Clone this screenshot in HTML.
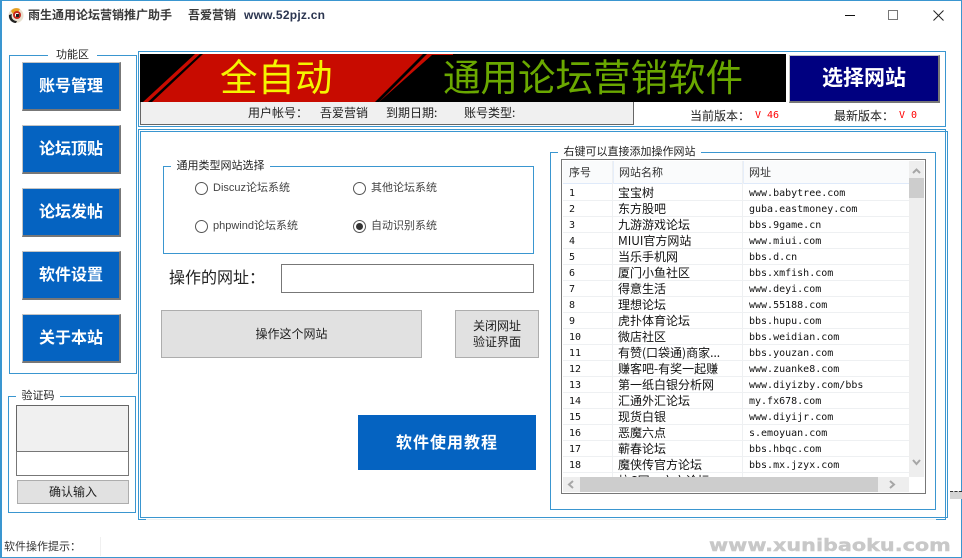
<!DOCTYPE html>
<html><head><meta charset="utf-8">
<style>
*{box-sizing:border-box;margin:0;padding:0}
html,body{width:962px;height:558px;overflow:hidden;background:#fff}
body{position:relative;font-family:"Liberation Sans","Noto Sans CJK SC",sans-serif;font-size:12px;color:#222}
.a{position:absolute}
.t{position:absolute;white-space:nowrap;line-height:16px}
.w{font-family:"WenQuanYi Zen Hei","Noto Sans CJK SC",sans-serif}
.bx{position:absolute;border:1px solid #3a96d0}
.lg{position:absolute;background:#fff;text-align:center;line-height:14px;height:14px;white-space:nowrap;font-size:11px}
.btn{position:absolute;left:22px;width:99px;height:49px;background:#0563c1;border-style:solid;border-width:1px 2px 2px 1px;border-color:#c4c4c4 #777 #777 #c4c4c4;color:#fff;font:bold 16px/43px "Noto Sans CJK SC",sans-serif;letter-spacing:0;text-align:center}
.gb{position:absolute;background:#e1e1e1;border:1px solid #adadad;text-align:center;display:flex;align-items:center;justify-content:center;line-height:16px}
.r{position:absolute;width:13px;height:13px;border:1px solid #555;border-radius:50%;background:#fff}
.r i{position:absolute;left:2px;top:2px;width:7px;height:7px;border-radius:50%;background:#333}
.rt{position:absolute;white-space:nowrap;line-height:16px;color:#444;font-size:11px}
.hd{position:absolute;top:165px;line-height:16px;color:#333;font-size:11px}
.n{position:absolute;left:569px;margin-top:1px;font:10px/16px "DejaVu Sans Mono",monospace;color:#111;height:16px}
.m{position:absolute;left:618px;width:124px;line-height:16px;height:16px;color:#111;white-space:nowrap;overflow:hidden;font-family:"WenQuanYi Zen Hei","Noto Sans CJK SC",sans-serif}
.u{position:absolute;left:749px;margin-top:1px;font:10px/16px "DejaVu Sans Mono",monospace;color:#111;height:16px;white-space:nowrap}
.hl{position:absolute;left:563px;width:346px;height:1px;background:#eef0f2}
</style></head><body>
<div class="a" style="left:0;top:0;width:962px;height:558px;border:1px solid #3a96d0;border-left-width:2px"></div>

<svg class="a" style="left:8px;top:7px" width="16" height="17" viewBox="0 0 16 17"><circle cx="8" cy="8.500" r="7.500" fill="#e8e0d0"/><path d="M3 4A7 7 0 0 1 12 2L10 5A4 4 0 0 0 5 7Z" fill="#e8a020"/><path d="M1 8A7 7 0 0 0 8 16L9 14A5 5 0 0 1 4 7Z" fill="#222"/><circle cx="9" cy="8" r="4" fill="#c8261c"/><circle cx="9" cy="8" r="2" fill="#fff"/><path d="M8 7h3v3h-3z" fill="#222"/></svg>
<div class="t" style="left:28px;top:7px;font-weight:bold;color:#3a3a3a;letter-spacing:0">雨生通用论坛营销推广助手</div>
<div class="t" style="left:188px;top:7px;font-weight:bold;color:#3a3a3a">吾爱营销</div>
<div class="t" style="left:244px;top:7px;font-weight:bold;color:#2b3550;font-size:12px;letter-spacing:.25px">www.52pjz.cn</div>

<div class="a" style="left:845px;top:15px;width:10px;height:1px;background:#111"></div>
<div class="a" style="left:888px;top:10px;width:10px;height:10px;border:1px solid #777"></div>
<svg class="a" style="left:933px;top:10px" width="11" height="11"><path d="M.5 .5L10.500 10.500M10.500 .5L.5 10.500" stroke="#222" fill="none"/></svg>

<div class="bx" style="left:9px;top:55px;width:128px;height:319px"></div>
<div class="lg" style="left:48px;top:48px;width:49px">功能区</div>
<div class="btn" style="top:62px">账号管理</div>
<div class="btn" style="top:125px">论坛顶贴</div>
<div class="btn" style="top:188px">论坛发帖</div>
<div class="btn" style="top:251px">软件设置</div>
<div class="btn" style="top:314px">关于本站</div>

<div class="bx" style="left:8px;top:396px;width:128px;height:117px"></div>
<div class="lg" style="left:16px;top:389px;width:44px">验证码</div>
<div class="a" style="left:16px;top:405px;width:113px;height:47px;background:#f0f0f0;border:1px solid #666"></div>
<div class="a" style="left:16px;top:451px;width:113px;height:25px;background:#fff;border:1px solid #777"></div>
<div class="gb" style="left:17px;top:480px;width:112px;height:24px;color:#222">确认输入</div>

<div class="bx" style="left:138px;top:51px;width:808px;height:76px"></div>
<svg class="a" style="left:140px;top:54px" width="646" height="48" viewBox="0 0 646 48">
<rect width="646" height="48" fill="#000"/>
<path d="M0 0H313V1H292L239 48H0Z" fill="#c80b00"/>
<path d="M283 0H287L239 48H235Z" fill="#000"/>
<path d="M0 0H55L3 48H0Z" fill="#000"/>
<path d="M60 0H63L12 48H8Z" fill="#000"/>
<text x="80" y="37" font-family="Noto Sans CJK SC" font-size="37.500" fill="#f5f500">全自动</text>
<text x="303" y="37" font-family="Noto Sans CJK SC" font-size="37.500" fill="#6aa800">通用论坛营销软件</text>
</svg>
<div class="a" style="left:789px;top:55px;width:151px;height:48px;background:#000080;border-style:solid;border-width:1px 2px 2px 1px;border-color:#c4c4c4 #777 #777 #c4c4c4;color:#fff;font:bold 21px/42px 'Noto Sans CJK SC',sans-serif;text-align:center">选择网站</div>
<div class="a" style="left:140px;top:102px;width:494px;height:23px;background:#f0f0f0;border-right:1px solid #666;border-bottom:1px solid #666;border-left:1px solid #666"></div>
<div class="t w" style="left:248px;top:105px">用户帐号：</div>
<div class="t w" style="left:320px;top:105px">吾爱营销</div>
<div class="t w" style="left:386px;top:105px">到期日期:</div>
<div class="t w" style="left:464px;top:105px">账号类型:</div>
<div class="t w" style="left:690px;top:108px">当前版本：</div>
<div class="t" style="left:755px;top:108px;color:#f00;font:10px/16px 'DejaVu Sans Mono',monospace">V 46</div>
<div class="t w" style="left:834px;top:108px">最新版本：</div>
<div class="t" style="left:899px;top:108px;color:#f00;font:10px/16px 'DejaVu Sans Mono',monospace">V 0</div>

<div class="a" style="left:138px;top:129px;width:808px;height:391px;border:1px solid #eef1f1"></div>
<div class="a" style="left:138px;top:129px;width:1px;height:391px;background:#3a96d0"></div>
<div class="a" style="left:138px;top:129px;width:808px;height:1px;background:#3a96d0"></div>
<div class="a" style="left:138px;top:519px;width:8px;height:1px;background:#3a96d0"></div>
<div class="a" style="left:936px;top:519px;width:10px;height:1px;background:#3a96d0"></div>
<div class="bx" style="left:140px;top:131px;width:808px;height:387px;background:#fff"></div>
<div class="a" style="left:945px;top:129px;width:1px;height:391px;background:#3a96d0"></div>

<div class="bx" style="left:163px;top:166px;width:371px;height:88px"></div>
<div class="lg" style="left:171px;top:159px;width:99px">通用类型网站选择</div>
<div class="r" style="left:195px;top:182px"></div><div class="rt" style="left:213px;top:180px">Discuz论坛系统</div>
<div class="r" style="left:353px;top:182px"></div><div class="rt" style="left:371px;top:180px">其他论坛系统</div>
<div class="r" style="left:195px;top:220px"></div><div class="rt" style="left:213px;top:218px">phpwind论坛系统</div>
<div class="r" style="left:353px;top:220px"><i></i></div><div class="rt" style="left:371px;top:218px">自动识别系统</div>

<div class="t" style="left:169px;top:271px;font-size:16px">操作的网址：</div>
<div class="a" style="left:281px;top:264px;width:253px;height:29px;border:1px solid #777"></div>
<div class="gb" style="left:161px;top:310px;width:261px;height:48px">操作这个网站</div>
<div class="gb" style="left:455px;top:310px;width:84px;height:48px">关闭网址<br>验证界面</div>
<div class="a" style="left:358px;top:415px;width:178px;height:55px;background:#0563c1;color:#fff;font:bold 16px/53px 'Noto Sans CJK SC',sans-serif;letter-spacing:1px;text-align:center">软件使用教程</div>

<div class="bx" style="left:550px;top:152px;width:386px;height:358px"></div>
<div class="lg" style="left:558px;top:145px;width:143px">右键可以直接添加操作网站</div>
<div class="a" style="left:561px;top:159px;width:365px;height:335px;border:1px solid #777"></div>
<div class="a" style="left:563px;top:161px;width:346px;height:23px;background:#fafbfc;border-bottom:1px solid #dfeafa"></div>
<div class="a" style="left:612px;top:161px;width:1px;height:316px;background:#eef0f2"></div>
<div class="a" style="left:613px;top:161px;width:1px;height:23px;background:#e6eefa"></div>
<div class="a" style="left:742px;top:161px;width:1px;height:316px;background:#eef0f2"></div>
<div class="a" style="left:743px;top:161px;width:1px;height:23px;background:#e6eefa"></div>
<div class="hd" style="left:569px">序号</div><div class="hd" style="left:619px">网站名称</div><div class="hd" style="left:749px">网址</div>

<div class="hl" style="top:200px"></div><div class="hl" style="top:216px"></div><div class="hl" style="top:232px"></div><div class="hl" style="top:248px"></div><div class="hl" style="top:264px"></div><div class="hl" style="top:280px"></div><div class="hl" style="top:296px"></div><div class="hl" style="top:312px"></div><div class="hl" style="top:328px"></div><div class="hl" style="top:344px"></div><div class="hl" style="top:360px"></div><div class="hl" style="top:376px"></div><div class="hl" style="top:392px"></div><div class="hl" style="top:408px"></div><div class="hl" style="top:424px"></div><div class="hl" style="top:440px"></div><div class="hl" style="top:456px"></div><div class="hl" style="top:472px"></div>

<div class="n" style="top:185px">1</div><div class="m" style="top:185px">宝宝树</div><div class="u" style="top:185px">www.babytree.com</div>
<div class="n" style="top:201px">2</div><div class="m" style="top:201px">东方股吧</div><div class="u" style="top:201px">guba.eastmoney.com</div>
<div class="n" style="top:217px">3</div><div class="m" style="top:217px">九游游戏论坛</div><div class="u" style="top:217px">bbs.9game.cn</div>
<div class="n" style="top:233px">4</div><div class="m" style="top:233px">MIUI官方网站</div><div class="u" style="top:233px">www.miui.com</div>
<div class="n" style="top:249px">5</div><div class="m" style="top:249px">当乐手机网</div><div class="u" style="top:249px">bbs.d.cn</div>
<div class="n" style="top:265px">6</div><div class="m" style="top:265px">厦门小鱼社区</div><div class="u" style="top:265px">bbs.xmfish.com</div>
<div class="n" style="top:281px">7</div><div class="m" style="top:281px">得意生活</div><div class="u" style="top:281px">www.deyi.com</div>
<div class="n" style="top:297px">8</div><div class="m" style="top:297px">理想论坛</div><div class="u" style="top:297px">www.55188.com</div>
<div class="n" style="top:313px">9</div><div class="m" style="top:313px">虎扑体育论坛</div><div class="u" style="top:313px">bbs.hupu.com</div>
<div class="n" style="top:329px">10</div><div class="m" style="top:329px">微店社区</div><div class="u" style="top:329px">bbs.weidian.com</div>
<div class="n" style="top:345px">11</div><div class="m" style="top:345px">有赞(口袋通)商家...</div><div class="u" style="top:345px">bbs.youzan.com</div>
<div class="n" style="top:361px">12</div><div class="m" style="top:361px">赚客吧-有奖一起赚</div><div class="u" style="top:361px">www.zuanke8.com</div>
<div class="n" style="top:377px">13</div><div class="m" style="top:377px">第一纸白银分析网</div><div class="u" style="top:377px">www.diyizby.com/bbs</div>
<div class="n" style="top:393px">14</div><div class="m" style="top:393px">汇通外汇论坛</div><div class="u" style="top:393px">my.fx678.com</div>
<div class="n" style="top:409px">15</div><div class="m" style="top:409px">现货白银</div><div class="u" style="top:409px">www.diyijr.com</div>
<div class="n" style="top:425px">16</div><div class="m" style="top:425px">恶魔六点</div><div class="u" style="top:425px">s.emoyuan.com</div>
<div class="n" style="top:441px">17</div><div class="m" style="top:441px">蕲春论坛</div><div class="u" style="top:441px">bbs.hbqc.com</div>
<div class="n" style="top:457px">18</div><div class="m" style="top:457px">魔侠传官方论坛</div><div class="u" style="top:457px">bbs.mx.jzyx.com</div>
<div class="a" style="left:618px;top:473px;width:124px;height:4px;overflow:hidden"><div class="m" style="left:0;top:0">杭C网一六六论坛</div></div>

<div class="a" style="left:909px;top:161px;width:15px;height:316px;background:#eee"></div>
<div class="a" style="left:909px;top:178px;width:15px;height:20px;background:#cdcdcd"></div>
<svg class="a" style="left:909px;top:161px" width="15" height="316"><path d="M4 12L7.500 8.500L11 12" stroke="#a6a6a6" stroke-width="2" fill="none"/><path d="M4 299L7.500 303L11 299" stroke="#a6a6a6" stroke-width="2" fill="none"/></svg>
<div class="a" style="left:563px;top:477px;width:346px;height:15px;background:#eee"></div>
<div class="a" style="left:580px;top:477px;width:298px;height:15px;background:#cdcdcd"></div>
<svg class="a" style="left:563px;top:477px" width="346" height="15"><path d="M10 4L6 7.500L10 11" stroke="#a6a6a6" stroke-width="2" fill="none"/><path d="M327 4L331 7.500L327 11" stroke="#a6a6a6" stroke-width="2" fill="none"/></svg>

<div class="a" style="left:950px;top:491px;width:12px;height:8px;background:#d4d4d4;border-top:1px dashed #333"></div>

<div class="a" style="left:100px;top:537px;width:1px;height:19px;background:#f0f0f0"></div>
<div class="t" style="left:4px;top:539px;color:#333;font-size:11px">软件操作提示：</div>
<div class="t" style="left:709px;top:536px;font:bold 17px/20px 'DejaVu Sans',sans-serif;color:#c8c8c8;transform:scaleX(1.22);transform-origin:0 0;-webkit-text-stroke:.4px #c8c8c8">www.xunibaoku.com</div>
</body></html>
